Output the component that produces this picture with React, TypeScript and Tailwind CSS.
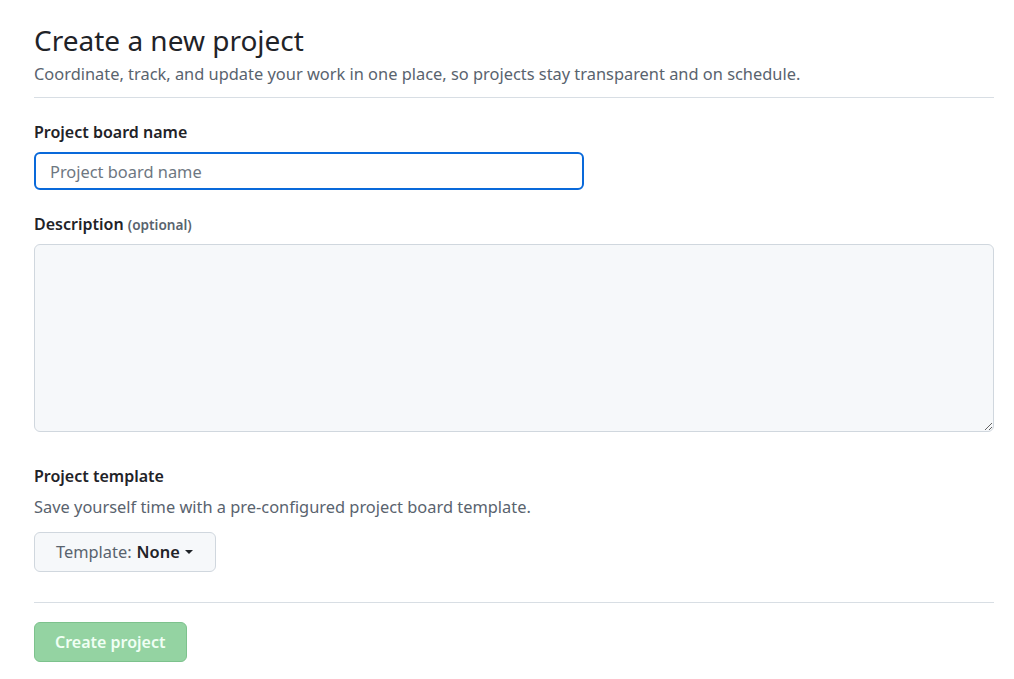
export default function App() {
  return (
    <div className="min-h-screen bg-white text-[#1f2328] font-['Noto_Sans',sans-serif]">
      <div className="pl-[34px] pr-[20px] pt-[22px] w-[1014px]">
        <div className="border-b border-[#d8dee4] pb-[11px]">
          <h1 className="text-[28px] leading-[36px] text-[#1f2328]">Create a new project</h1>
          <p className="text-[16.4px] leading-[24px] text-[#59636e] mt-[4px]">
            Coordinate, track, and update your work in one place, so projects stay transparent and on schedule.
          </p>
        </div>

        <div className="mt-[22px]">
          <label className="block text-[16px] leading-[24px] font-semibold">Project board name</label>
          <input
            autoFocus
            placeholder="Project board name"
            className="mt-[8px] w-[550px] h-[38px] px-[14px] rounded-[6px] border-2 border-[#0969da] outline-none text-[16.4px] placeholder:text-[#6e7781]"
          />
        </div>

        <div className="mt-[22px]">
          <label className="block text-[16px] leading-[24px] font-semibold">
            Description <span className="text-[13.6px] font-semibold text-[#59636e]">(optional)</span>
          </label>
          <textarea className="mt-[7px] block w-[960px] h-[188px] rounded-[6px] border border-[#d0d7de] bg-[#f6f8fa] outline-none" />
        </div>

        <div className="mt-[32px]">
          <div className="text-[16px] leading-[24px] font-semibold">Project template</div>
          <p className="text-[16.4px] leading-[24px] text-[#59636e] mt-[7px]">
            Save yourself time with a pre-configured project board template.
          </p>
          <button className="mt-[13px] h-[40px] pl-[21px] pr-[22px] rounded-[6px] border border-[#d0d7de] bg-[#f6f8fa] text-[16.4px] flex items-center">
            <span className="text-[#59636e]">Template:</span>
            <span className="ml-[5px] font-semibold text-[#1f2328]">None</span>
            <span className="ml-[5px] w-0 h-0 border-l-[4px] border-r-[4px] border-t-[4px] border-l-transparent border-r-transparent border-t-[#1f2328]" />
          </button>
        </div>

        <div className="mt-[30px] border-t border-[#d8dee4] pt-[19px]">
          <button className="h-[40px] px-[20px] rounded-[6px] bg-[#94d3a2] border border-[#7dc28d] text-[16px] font-semibold text-[#f0fff4]">
            Create project
          </button>
        </div>
      </div>
    </div>
  );
}
